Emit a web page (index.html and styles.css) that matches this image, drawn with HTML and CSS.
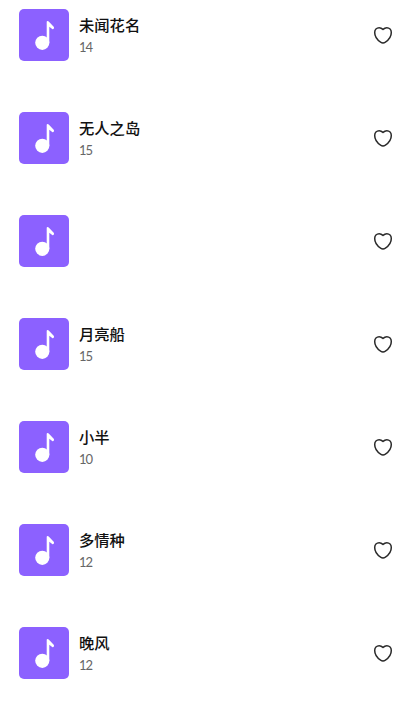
FILE: index.html
```html
<!DOCTYPE html>
<html lang="zh-CN">
<head>
<meta charset="utf-8">
<title>音乐</title>
<link rel="stylesheet" href="styles.css">
</head>
<body>
<svg class="defs" aria-hidden="true">
<symbol id="note" viewBox="0 0 50 52"><circle cx="23.3" cy="33.8" r="7.1"/><path d="M27.7 12.8q.1-.9.9-.9.6 0 1.1.6l5 5.2q.8.9.1 1.9t-1.6.3l-2.9-2.1v16h-2.6z"/></symbol>
<symbol id="heart" viewBox="0 0 20 20"><path d="M10 4.400C11.200 3.300 12.500 2.700 13.800 2.700c2.600 0 4.500 2 4.500 4.900 0 4.100-2.700 7.500-5.900 9.600q-2.400 1.500-4.800 0C4.400 15.100 1.700 11.700 1.700 7.600c0-2.900 1.900-4.900 4.500-4.900 1.300 0 2.600.6 3.800 1.700z"/></symbol>
</svg>
<ul class="songs">
<li class="song"><svg class="cover"><use href="#note"/></svg><div class="info"><div class="title">未闻花名</div><div class="count">14</div></div><svg class="heart"><use href="#heart"/></svg></li>
<li class="song"><svg class="cover"><use href="#note"/></svg><div class="info"><div class="title">无人之岛</div><div class="count">15</div></div><svg class="heart"><use href="#heart"/></svg></li>
<li class="song"><svg class="cover"><use href="#note"/></svg><div class="info"></div><svg class="heart"><use href="#heart"/></svg></li>
<li class="song"><svg class="cover"><use href="#note"/></svg><div class="info"><div class="title">月亮船</div><div class="count">15</div></div><svg class="heart"><use href="#heart"/></svg></li>
<li class="song"><svg class="cover"><use href="#note"/></svg><div class="info"><div class="title">小半</div><div class="count">10</div></div><svg class="heart"><use href="#heart"/></svg></li>
<li class="song"><svg class="cover"><use href="#note"/></svg><div class="info"><div class="title">多情种</div><div class="count">12</div></div><svg class="heart"><use href="#heart"/></svg></li>
<li class="song"><svg class="cover"><use href="#note"/></svg><div class="info"><div class="title">晚风</div><div class="count">12</div></div><svg class="heart"><use href="#heart"/></svg></li>
</ul>
</body>
</html>
```

FILE: styles.css
```css
body {
  margin: 0;
  height: 711px;
  overflow: hidden;
  background: #fff;
  font-family: "Noto Sans CJK SC", sans-serif;
}
.defs { display: none; }
.songs {
  list-style: none;
  margin: 0;
  padding: 9px 7px 0 19px;
  display: flex;
  flex-direction: column;
  gap: 51px;
}
.song {
  display: flex;
  align-items: center;
  height: 52px;
}
.cover {
  width: 50px;
  height: 52px;
  border-radius: 5px;
  background: #8c61ff;
  fill: #fff;
}
.info {
  flex: 1;
  margin-left: 10px;
  padding-top: 2px;
}
.title {
  font-size: 15.3px;
  line-height: 22px;
  font-weight: 500;
  color: #111;
}
.count {
  font-family: Lato, "Noto Sans CJK SC", sans-serif;
  font-size: 13px;
  line-height: 24px;
  letter-spacing: -1px;
  color: #666;
}
.heart {
  width: 20px;
  height: 20px;
  fill: none;
  stroke: #2a2a2a;
  stroke-width: 1.5;
  stroke-linejoin: round;
}
```
